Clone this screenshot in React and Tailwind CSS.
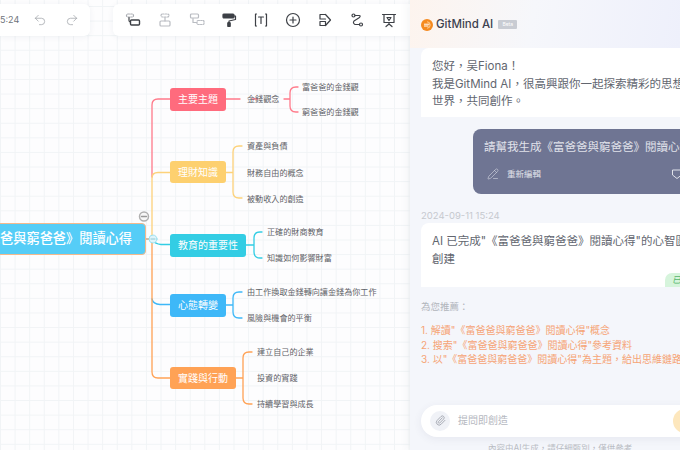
import { Paperclip, PencilLine, Undo2, Redo2 } from 'lucide-react';

const FONT = "font-['Inter','Noto_Sans_CJK_TC',sans-serif]";

const TOPICS = [
  { label: '主要主題', cls: 'left-[170px] top-[88px] w-[56px] h-[23px] bg-[#ff6b7d]' },
  { label: '理財知識', cls: 'left-[170px] top-[161px] w-[56px] h-[22px] bg-[#fdd06f]' },
  { label: '教育的重要性', cls: 'left-[170px] top-[234px] w-[76px] h-[23px] bg-[#33cde4]' },
  { label: '心態轉變', cls: 'left-[170px] top-[294px] w-[56px] h-[23px] bg-[#3eb8f8]' },
  { label: '實踐與行動', cls: 'left-[170px] top-[367px] w-[66px] h-[22px] bg-[#ffa255]' },
];

const LEAVES = [
  { label: '金錢觀念', cls: 'left-[247px] top-[93px]' },
  { label: '富爸爸的金錢觀', cls: 'left-[302px] top-[81px]' },
  { label: '窮爸爸的金錢觀', cls: 'left-[302px] top-[106px]' },
  { label: '資產與負債', cls: 'left-[247px] top-[140px]' },
  { label: '財務自由的概念', cls: 'left-[247px] top-[167px]' },
  { label: '被動收入的創造', cls: 'left-[247px] top-[193px]' },
  { label: '正確的財商教育', cls: 'left-[267px] top-[226px]' },
  { label: '知識如何影響財富', cls: 'left-[267px] top-[252px]' },
  { label: '由工作換取金錢轉向讓金錢為你工作', cls: 'left-[247px] top-[286px]' },
  { label: '風險與機會的平衡', cls: 'left-[247px] top-[312px]' },
  { label: '建立自己的企業', cls: 'left-[257px] top-[346px]' },
  { label: '投資的實踐', cls: 'left-[257px] top-[372px]' },
  { label: '持續學習與成長', cls: 'left-[257px] top-[398px]' },
];

function Connectors() {
  return (
    <svg className="absolute left-0 top-0" width="410" height="450" fill="none" strokeWidth="1.3" strokeLinecap="round">
      <path d="M146 239H152" stroke="#c9a78c" strokeWidth="1.6" />
      <path d="M152 177V105Q152 99 158 99H170M226 99H240M252 99H258" stroke="#ff7a8a" />
      <path d="M284 99H290M298 87H296Q290 87 290 93V106Q290 112 296 112H298" stroke="#ff7a8a" />
      <path d="M152 240V178Q152 172.500 158 172.500H170" stroke="#fdd27a" />
      <path d="M226 172.500H233M242 146H239Q233 146 233 152V192Q233 198 239 198H242" stroke="#fdd27a" />
      <path d="M153 240Q155 244 161 244.500H170" stroke="#33cde4" />
      <path d="M246 245H254M262 232H260Q254 232 254 238V252Q254 258 260 258H262" stroke="#33cde4" />
      <path d="M152 299Q153 304 160 304.500H170" stroke="#3eb8f8" />
      <path d="M226 305H233M242 292H239Q233 292 233 298V312Q233 318 239 318H242" stroke="#3eb8f8" />
      <path d="M152 241V372Q152 378 158 378H170" stroke="#ffa255" />
      <path d="M236 378H243M252 352H249Q243 352 243 358V398Q243 404 249 404H252" stroke="#ffa255" />
      <circle cx="153" cy="239" r="4" fill="#dff5fb" stroke="#8fdcec" strokeWidth="0.8" />
      <path d="M151 239H155" stroke="#7bbccc" strokeWidth="0.8" />
      <circle cx="144" cy="216.500" r="4.500" fill="#f7f7f7" stroke="#b0b0b0" strokeWidth="1.500" />
      <path d="M141.500 216.500H146.500" stroke="#999" />
    </svg>
  );
}

function ToolIcon({ children, dim }) {
  return (
    <svg width="16" height="16" viewBox="0 0 16 16" fill="none" stroke={dim ? '#b9bcc2' : '#3d4046'} strokeWidth="1.2" strokeLinecap="round" strokeLinejoin="round">
      {children}
    </svg>
  );
}

function Toolbar() {
  return (
    <div className="relative flex gap-[23px] pt-[4px]">
      <div className="flex h-[32px] w-[90px] items-center rounded-r-[6px] bg-white shadow-[0_1px_6px_rgba(40,50,80,0.06)]">
        <span className="text-[9px] text-[#70747b]">5:24</span>
        <Undo2 size={14} strokeWidth={1.2} color="#9a9da3" className="ml-[14px]" />
        <Redo2 size={14} strokeWidth={1.2} color="#9a9da3" className="ml-[18px]" />
      </div>
      <div className="flex h-[32px] w-[297px] items-center gap-[16px] rounded-l-[6px] bg-white pl-[12px] shadow-[0_1px_6px_rgba(40,50,80,0.06)]">
        <ToolIcon>
          <rect x="1.500" y="2" width="7" height="3" rx="1.500" stroke="#a9acb2" strokeDasharray="1.500 1.200" />
          <path d="M4 5.500V8.500Q4 10 5.500 10" />
          <rect x="5.500" y="8" width="9" height="5" rx="1" strokeWidth="1.400" />
        </ToolIcon>
        <ToolIcon dim>
          <rect x="4" y="2" width="8" height="3" rx="1.500" strokeDasharray="1.500 1.200" />
          <path d="M8 5.500V9" />
          <rect x="3" y="9" width="10" height="5" rx="1" />
        </ToolIcon>
        <ToolIcon dim>
          <rect x="1.500" y="2" width="8" height="4" rx="1" />
          <path d="M4 6.500V10.500H7.500" />
          <rect x="8" y="8.500" width="7" height="4" rx="1" strokeDasharray="1.500 1.200" />
        </ToolIcon>
        <ToolIcon>
          <rect x="2" y="2" width="11" height="4" rx="1" fill="#3d4046" />
          <path d="M13 4H14.500V7.500L8 9V11" />
          <rect x="6.800" y="10.500" width="2.400" height="4" rx="0.600" fill="#3d4046" />
        </ToolIcon>
        <ToolIcon>
          <path d="M3.500 2H2.500V14H3.500M12.500 2H13.500V14H12.500M5.500 5H10.500M8 5V11.500" />
        </ToolIcon>
        <ToolIcon>
          <circle cx="8" cy="8" r="6.500" />
          <path d="M5 8H11M8 5V11" />
        </ToolIcon>
        <ToolIcon>
          <path d="M8.500 2.500H3V7H8.500" />
          <path d="M3 9.500V13.500H8.500V9.500H3" />
          <path d="M8.500 2.500L13.500 8L8.500 13.500" />
        </ToolIcon>
        <ToolIcon>
          <circle cx="4.500" cy="3.500" r="1.500" />
          <circle cx="12" cy="12.500" r="1.500" />
          <path d="M6 3.500H10Q12 3.500 10.500 5.500L5 9Q3.500 11 6 12.500H10.500" />
        </ToolIcon>
        <ToolIcon>
          <path d="M1.500 2.500H14.500M3 2.500V10.500H13V2.500M8 10.500V12M5 14.500L8 12L11 14.500M6 5.500H10L8 8.500Z" />
        </ToolIcon>
      </div>
    </div>
  );
}

function MindMap() {
  return (
    <div className="relative h-full w-[410px] shrink-0 overflow-hidden bg-[#fdfdfe] bg-[linear-gradient(#f1f4f6_1px,transparent_1px),linear-gradient(90deg,#f1f4f6_1px,transparent_1px)] bg-[size:14.600px_14.600px] bg-[position:0px_6px]">
      <Connectors />
      <div className="absolute left-[-60px] top-[223px] flex h-[32px] w-[206px] items-center justify-end rounded-[4px] border-[1.500px] border-[#f4b98c] bg-[#55cdf7] pr-[13px] text-[13.200px] font-medium text-white">
        <span className="whitespace-nowrap">《富爸爸與窮爸爸》閱讀心得</span>
      </div>
      {TOPICS.map((t) => (
        <div key={t.label} className={`absolute flex items-center justify-center rounded-[3px] text-[10px] text-white ${t.cls}`}>
          {t.label}
        </div>
      ))}
      {LEAVES.map((l) => (
        <div key={l.label} className={`absolute whitespace-nowrap text-[8.100px] leading-[12px] text-[#5f6267] ${l.cls}`}>
          {l.label}
        </div>
      ))}
      <Toolbar />
    </div>
  );
}

function ChatPanel() {
  return (
    <div className="relative h-full flex-1 overflow-hidden bg-[#f4f6fb] shadow-[-3px_0_8px_rgba(60,70,100,0.05)]">
      <div className="h-[48px] bg-[linear-gradient(100deg,#fdf4ee_0%,#f6f7fb_45%,#eef0fb_100%)] pl-[11px] pt-[16px]">
        <div className="flex items-center">
          <svg width="12" height="12" viewBox="0 0 12 12" fill="none">
            <circle cx="6" cy="6" r="6" fill="#f58a1f" />
            <path d="M3 5.200H8.500M3 7H7.500" stroke="#fff" strokeWidth="1" />
            <path d="M6 2.800A3.200 3.200 0 1 1 6 9.200" stroke="#ffd9a8" strokeWidth="0.800" />
          </svg>
          <span className="ml-[3px] text-[11.500px] font-medium text-[#3d4250]">GitMind AI</span>
          <span className="ml-[5px] flex h-[9px] w-[19px] items-center justify-center rounded-[1px] bg-[#c9ccd3] text-[5px] text-white">Beta</span>
        </div>
      </div>

      <div className="ml-[11px] h-[69px] w-[290px] rounded-t-[8px] bg-white pl-[11px] pt-[10px] text-[11.500px] leading-[17.500px] text-[#62666f]">
        <p className="whitespace-nowrap">您好，吴Fiona！</p>
        <p className="whitespace-nowrap">我是GitMind AI，很高興跟你一起探索精彩的思想</p>
        <p className="whitespace-nowrap">世界，共同創作。</p>
      </div>

      <div className="ml-[63px] mt-[12px] h-[65px] w-[240px] rounded-[8px] bg-[#6f7593] pl-[11px] pt-[9px] text-[#e0e2ea]">
        <p className="whitespace-nowrap text-[11.500px] leading-[18px]">請幫我生成《富爸爸與窮爸爸》閱讀心得</p>
        <div className="mt-[12px] flex items-center">
          <PencilLine size={12} strokeWidth={1.1} className="ml-[3px]" />
          <span className="ml-[8px] text-[8.500px] leading-[12px]">重新編輯</span>
          <svg className="ml-[130px]" width="12" height="12" viewBox="0 0 12 12" fill="none" stroke="#e0e2ea" strokeWidth="1">
            <path d="M1.500 2H10.500V7L6 10.500L1.500 7Z" />
          </svg>
        </div>
      </div>

      <p className="ml-[11px] mt-[15px] text-[9.500px] leading-[14px] text-[#c6c9cf]">2024-09-11 15:24</p>

      <div className="relative ml-[11px] h-[64px] w-[290px] rounded-t-[8px] bg-white pl-[11px] pt-[10px] text-[11.500px] leading-[17.500px] text-[#62666f]">
        <p className="whitespace-nowrap">AI 已完成"《富爸爸與窮爸爸》閱讀心得"的心智圖</p>
        <p>創建</p>
        <div className="absolute bottom-0 left-[244px] flex h-[14px] w-[46px] items-center rounded-tl-[7px] bg-[#d6f4dc] pl-[7px] text-[9px] italic text-[#55b56c]">
          已
        </div>
      </div>

      <p className="ml-[11px] mt-[13px] text-[9.500px] leading-[14px] text-[#b1b5bc]">為您推薦：</p>

      <div className="ml-[11px] mt-[9px] whitespace-nowrap text-[10px] leading-[14.600px] text-[#f6a476]">
        <p>1. 解讀"《富爸爸與窮爸爸》閱讀心得"概念</p>
        <p>2. 搜索"《富爸爸與窮爸爸》閱讀心得"參考資料</p>
        <p>3. 以"《富爸爸與窮爸爸》閱讀心得"為主題，給出思維鏈路</p>
      </div>

      <div className="ml-[11px] mt-[38px] flex h-[32px] w-[290px] items-center rounded-full bg-white pl-[9px] shadow-[0_2px_8px_rgba(60,70,100,0.08)]">
        <div className="flex h-[20px] w-[20px] items-center justify-center rounded-full bg-[#f0f2f7]">
          <Paperclip size={11} strokeWidth={1.8} color="#9a9ea8" />
        </div>
        <span className="ml-[8px] text-[10px] text-[#b6b9c1]">提問即創造</span>
        <div className="ml-[165px] h-[24px] w-[24px] rounded-full bg-[#fde7bd]" />
      </div>

      <p className="ml-[78px] mt-[5px] whitespace-nowrap text-[8.500px] leading-[12px] text-[#b9bcc3]">內容由AI生成，請仔細甄別，僅供參考</p>
    </div>
  );
}

export default function App() {
  return (
    <div lang="zh-TW" className={`flex h-[450px] w-[680px] overflow-hidden ${FONT}`}>
      <MindMap />
      <ChatPanel />
    </div>
  );
}
